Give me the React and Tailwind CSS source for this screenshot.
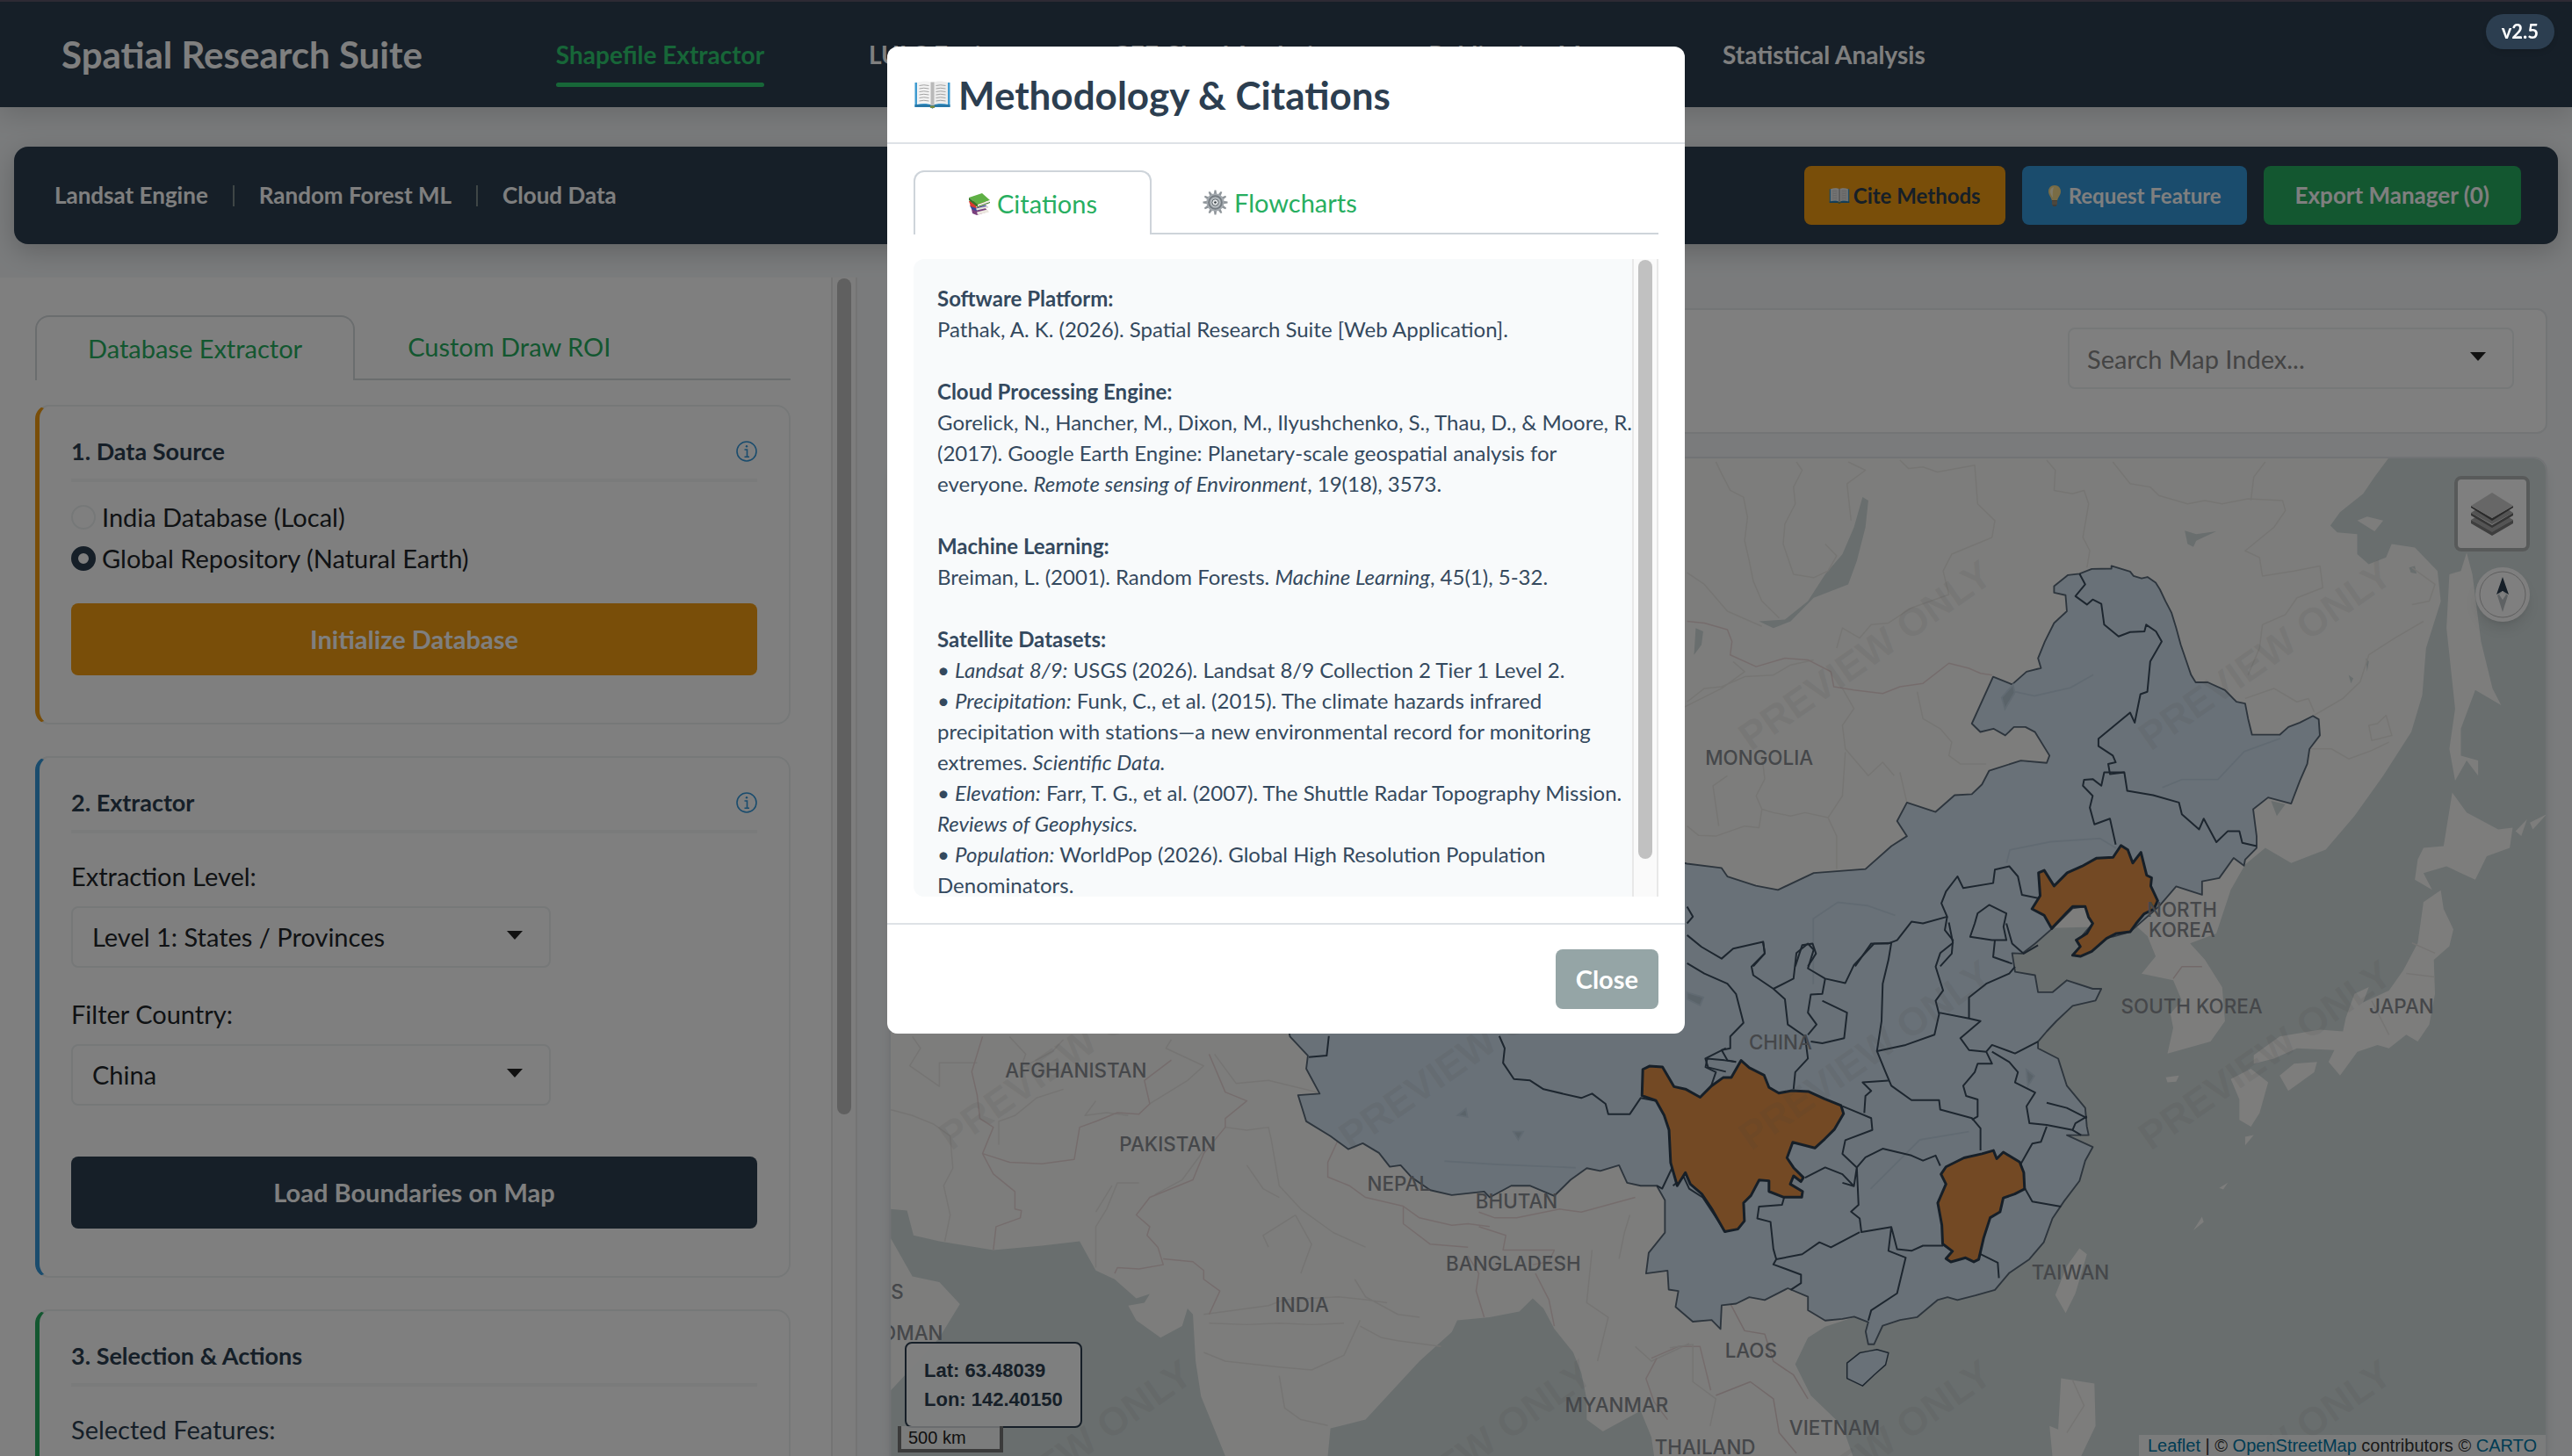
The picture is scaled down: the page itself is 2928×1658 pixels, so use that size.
import React, { useState } from 'react';

const navItems = [
  'Shapefile Extractor',
  'LULC Engine',
  'GEE Cloud Analysis',
  'Publication Maps',
  'Statistical Analysis'
];

const mapLabels = [
  { text: 'MONGOLIA', x: 1072, y: 466 },
  { text: 'CHINA', x: 1085, y: 640 },
  { text: 'NORTH', x: 1330, y: 559 },
  { text: 'KOREA', x: 1330, y: 571 },
  { text: 'SOUTH KOREA', x: 1336, y: 618 },
  { text: 'JAPAN', x: 1464, y: 618 },
  { text: 'TAIWAN', x: 1262, y: 780 },
  { text: 'AFGHANISTAN', x: 655, y: 657 },
  { text: 'PAKISTAN', x: 711, y: 702 },
  { text: 'NEPAL', x: 852, y: 726 },
  { text: 'BHUTAN', x: 924, y: 737 },
  { text: 'BANGLADESH', x: 922, y: 775 },
  { text: 'INDIA', x: 793, y: 800 },
  { text: 'MYANMAR', x: 985, y: 861 },
  { text: 'LAOS', x: 1067, y: 828 },
  { text: 'VIETNAM', x: 1118, y: 875 },
  { text: 'THAILAND', x: 1039, y: 887 },
  { text: 'S', x: 546, y: 792 },
  { text: 'OMAN', x: 555, y: 817 }
];

const watermarkCols = [579, 823, 1067, 1311];
const watermarkRows = [458, 702, 946];

const OpenBook = ({ className }) => (
  <svg viewBox="0 0 42 32" className={className} aria-hidden="true">
    <path d="M1 2h40v28H24l-3 1.500-3-1.500H1z" fill="#3f9bd0" />
    <path d="M1 27h40v3H24l-3 1.500-3-1.500H1z" fill="#2878a8" />
    <path d="M18 28.500h6l-1 2.500h-4z" fill="#7c8a3a" />
    <path d="M3.500 2C9 0 17 0 20.500 2v26C16 25.500 9 25.500 3.500 27z" fill="#f3f3f3" />
    <path d="M38.500 2C33 0 25 0 21.500 2v26c4.500-2.500 11.500-2.500 17-1z" fill="#ececec" />
    <path d="M19 1.500h4V28h-4z" fill="#b9b9b9" />
    <path
      d="M6 5.500q5-1.500 11 0M6 9q5-1.500 11 0M6 12.500q5-1.500 11 0M6 16q5-1.500 11 0M6 19.500q5-1.500 11 0M6 23q5-1.500 11 0M25 5.500q5-1.500 11 0M25 9q5-1.500 11 0M25 12.500q5-1.500 11 0M25 16q5-1.500 11 0M25 19.500q5-1.500 11 0M25 23q5-1.500 11 0"
      stroke="#a3a3a3"
      strokeWidth="1"
      fill="none"
    />
  </svg>
);

const Books = ({ className }) => (
  <svg viewBox="0 0 26 26" className={className} aria-hidden="true">
    <path d="M4 19l15-2 4 5-13 4-5-2z" fill="#7a3f7d" />
    <path d="M10 22.500l12-3 2 3-13 3z" fill="#ece7df" />
    <path d="M2 15l16-2 5 4-14 4-5-2z" fill="#39479b" />
    <path d="M9 18.500l13-3 1 2-13 3z" fill="#e9e3da" />
    <path d="M1 10l17-1 5 4-14 5-6-2z" fill="#d83a30" />
    <path d="M9 15.500l14-4 .500 2-14 4z" fill="#f1e9e2" />
    <path d="M1 6L16 1l9 8-14 5z" fill="#5fb045" />
    <path d="M1 6l10 8v3L1 9z" fill="#34752a" />
    <path d="M11 14l14-5v2l-14 5.500z" fill="#f1efe8" />
    <path d="M11 16l14-5v1l-14 5z" fill="#34752a" />
  </svg>
);

const Gear = ({ className }) => (
  <svg viewBox="-15 -15 30 30" className={className} aria-hidden="true">
    <g fill="#8e9499">
      {[0, 30, 60, 90, 120, 150, 180, 210, 240, 270, 300, 330].map((deg) => (
        <path key={deg} d="M-1.800-9L-1-14.500h2L1.800-9z" transform={`rotate(${deg})`} />
      ))}
    </g>
    <circle r="10.500" fill="#a4aaaf" />
    <circle r="8.500" fill="#747b81" />
    <circle r="6.500" fill="#b3b9bd" />
    <circle r="3.800" fill="#e6e9eb" stroke="#5c6369" strokeWidth="1" />
    <circle r="1.400" fill="#3d4449" />
  </svg>
);

const Bulb = ({ className }) => (
  <svg viewBox="0 0 16 24" className={className} aria-hidden="true">
    <path d="M8 0C3.500 0 1 3.300 1 7c0 4.500 3.500 6.500 4 11h6c.500-4.500 4-6.500 4-11 0-3.700-2.500-7-7-7z" fill="#f2d98a" />
    <path d="M7 2C4.500 2.500 3 4.500 3 7s1.500 4.500 3 7c-.500-5 0-9 1-12z" fill="#fff5cf" />
    <path d="M5 17h6v4.500L9.500 24h-3L5 21.500z" fill="#84796a" />
    <path d="M5 19h6M5 21h6" stroke="#c0b8a8" strokeWidth=".7" />
  </svg>
);

const InfoMark = () => (
  <svg viewBox="0 0 24 24" className="w-6 h-6" fill="none" stroke="#3498db" strokeWidth="1.600" aria-hidden="true">
    <circle cx="12" cy="12" r="11" />
    <path d="M9.500 10h3v8M9.500 18.200h5.500" />
    <circle cx="12" cy="6.300" r="1.200" fill="#3498db" stroke="none" />
  </svg>
);

const Caret = ({ className }) => (
  <svg viewBox="0 0 18 10" className={`pointer-events-none absolute w-[18px] h-[10px] ${className}`} aria-hidden="true">
    <path d="M0 0h18L9 10z" fill="#222" />
  </svg>
);

const ScrollRail = ({ thumbClass }) => (
  <div className="w-[30px] shrink-0 bg-[#fafafa] border-x-2 border-[#e8e8e8] flex justify-center pt-px">
    <div className={`w-4 rounded-full bg-[#c1c1c1] ${thumbClass}`} />
  </div>
);

const Card = ({ title, info, accent, children }) => (
  <section className={`bg-white rounded-2xl border-2 border-[#ecf0f1] border-l-[5px] px-9 pt-8 pb-[54px] mb-9 ${accent}`}>
    <div className="flex items-center justify-between border-b-4 border-[#f4f6f7] h-[54px] pb-3">
      <h2 className="font-bold text-[27px] text-[#2c3e50]">{title}</h2>
      {info && (
        <button type="button" aria-label={`About ${title}`}>
          <InfoMark />
        </button>
      )}
    </div>
    {children}
  </section>
);

const SelectField = ({ id, label, value, options, className }) => (
  <div className={className}>
    <label htmlFor={id} className="block leading-[45px] mb-3 text-[#212529]">{label}</label>
    <div className="relative w-[546px] max-w-full">
      <select
        id={id}
        defaultValue={value}
        className="appearance-none w-full h-[70px] rounded-lg border-2 border-[#ecf0f1] bg-white px-[22px] text-[#212529]"
      >
        {options.map((o) => <option key={o}>{o}</option>)}
      </select>
      <Caret className="right-8 top-7" />
    </div>
  </div>
);

const BaseMap = () => (
  <svg viewBox="542 279 1011 609" preserveAspectRatio="xMinYMin slice" className="absolute inset-0 w-full h-full" aria-hidden="true">
    <rect x="542" y="279" width="1011" height="609" fill="#fafaf8" />

    {/* Pacific side */}
    <path
      fill="#d2dcdc"
      d="M1456 279L1447.600 290.300 1440.600 300.600 1426.500 311.900 1420.600 320 1424.800 324.100 1437 325.200V337.500L1444 343.600 1454.600 339.500 1458 331.300 1472.200 333.400 1486 347.700 1488 366.200 1479 394.800 1476.700 423.500 1470 446 1452.900 472.700 1435.300 497.300 1417.800 517.800 1396.700 526 1380.900 516.800 1368.600 527 1359.800 542.400 1351 569 1335 575 1344 585 1354.600 601.800 1356.300 622.500 1347.500 635 1321.200 642.300 1324.700 626.700 1323 618 1330 610 1324.700 597.600 1305.400 593.500 1314 583 1309 570.600 1302 564.400 1240 566 1210 600 1230 700 1190 770 1140 800 1112.300 809 1101.800 815.700 1094 832 1103.500 851 1122.800 869.700 1129.200 888H1553V279z"
    />
    {/* Arabian Sea and Bay of Bengal */}
    <g fill="#d2dcdc" transform="matrix(.3292 0 0 .1785 535.5 615.9)">
      <path d="M20 680L50 685 62 770 110 790 210 820 300 805 370 790 385 840 400 890 435 920 475 985 500 970 490 1000 460 1010 475 1060 520 1120 560 1080 570 1020 580 1040 585 1200 595 1320 640 1524H20z" />
      <path d="M830 1524L835 1430 900 1400 1000 1200 1060 1100 1070 1060 1130 1050 1185 1030 1210 985 1230 1020 1250 1090 1285 1170 1300 1240 1310 1330V1400L1340 1440 1410 1370 1430 1460 1435 1524z" />
      <path d="M20 780L60 910 110 930 148 1005 110 1120 45 1250 20 1300z" fill="#fafaf8" />
    </g>

    {/* lakes, Sakhalin, Hokkaido */}
    <g transform="matrix(.3511 0 0 .2049 1017.5 267.8)">
      <g fill="#d2dcdc">
        <path d="M335 170L345 180 340 260 325 360 310 430 250 470 210 540 180 560 155 540 200 535 240 480 270 400 300 340 320 260z" />
        <path d="M45 560L58 570 55 610 42 640z" />
        <path d="M895 270L915 280 950 272 915 300 910 318 900 310z" />
        <path d="M1285 380L1295 375 1298 398 1288 395zM1210 650L1215 660 1212 690zM1180 700L1188 710 1184 725z" />
        <path d="M1045 1075L1070 1085 1055 1120z" />
      </g>
      <g fill="#fafaf8">
        <path d="M1385 335L1395 400 1410 600 1430 740 1445 790 1400 745 1375 860V940L1405 955V1000L1385 955 1365 1015 1355 920 1365 800 1350 560 1355 400 1375 390z" />
        <path d="M1360 1050L1385 1110 1440 1160 1465 1155 1460 1215 1420 1240 1400 1310 1350 1270 1310 1290 1325 1340 1295 1310 1300 1250 1310 1215 1345 1210z" />
        <path d="M1212 228L1240 240 1225 272 1195 240z" />
        <path d="M1470 1165L1490 1130 1480 1180zM1495 1140L1524 1115 1500 1160z" />
      </g>
    </g>

    {/* Honshu, Kyushu, Shikoku, Taiwan, Luzon */}
    <g fill="#fafaf8" transform="matrix(.3511 0 0 .2077 1017.5 562.3)">
      <path d="M1310 -60L1340 -95 1345 -40 1362 20 1355 70 1328 110 1330 210 1320 300 1300 350 1280 330 1250 370 1230 360 1195 380 1165 450 1145 410 1155 375 1090 370 1050 400 1015 415V390L1060 335 1130 315 1170 320 1175 280 1190 210 1215 190 1205 235 1250 200 1275 140 1300 60z" />
      <path d="M975 460L1010 430 1040 470 1025 560 1010 600 990 580V520z" />
      <path d="M1060 450L1085 415 1125 410 1120 440 1075 495z" />
      <path d="M712 958L725 975 705 1090 688 1148 670 1095 690 1010z" />
      <path d="M680 1340L738 1355 740 1480 715 1568H665L660 1480 675 1490z" />
      <path d="M862 455L885 450 880 468 865 470zM1000 630L1015 625 1000 655zM910 905L925 865 928 880zM955 780L970 765 962 785z" />
    </g>

    {/* administrative lines of the base layer */}
    <g fill="none" strokeWidth="1.500" strokeLinejoin="round">
      <g transform="matrix(.3511 0 0 .2049 1017.5 267.8)">
        <g stroke="#ecebe7">
          <path vectorEffect="non-scaling-stroke" d="M80 65L90 100 105 150 128 170 135 230 130 300 138 360 145 420 160 480 190 530M220 65L230 90 215 140 218 190 200 250 197 310 215 400 250 410 275 390 290 345 270 310M310 65L340 90 308 130 315 240M400 60L415 85 440 80 465 95 530 75 535 190 565 240 560 290 490 340 475 390 485 460 420 500 380 545 350 550 330 590 300 560 290 620" />
          <path vectorEffect="non-scaling-stroke" d="M655 60L670 90 668 150 700 160 720 150 728 190 718 290 730 330 725 380M770 65L800 130 835 140 850 165 900 190 930 180 960 190 1005 175 1065 180 1070 210 1050 260 1000 330 1025 350 1030 405 1085 390 1130 375 1135 440 1090 470 1070 520 1030 550 1025 620 1005 700M1035 65L1015 110 1010 180" />
          <path vectorEffect="non-scaling-stroke" d="M30 395L60 430 100 510 160 555M30 780L60 740 90 735 130 705 180 700 210 670 250 655M110 660L130 690 90 740 20 800M300 740L320 800 300 850 305 920 345 1000 370 960 390 1000M430 750L440 830 470 860 490 900 485 940 505 965 550 965M30 1150L50 1178 80 1180 130 1150 155 1155 160 1100 180 1110 210 1120 235 1110 275 1125 290 1180 290 1278M305 930L300 1060 275 1125M400 990L412 1080M100 1000L75 1030 85 1150M160 940L165 1010 150 1060 160 1100" />
          <path vectorEffect="non-scaling-stroke" d="M1290 380L1330 430 1320 480 1290 490M1310 540L1260 590 1215 640 1200 720 1170 770 1120 820M1000 770L1050 740 1090 780 1110 770 1120 810M1110 920L1150 920 1180 950 1220 925 1250 900M1215 850L1230 845 1245 820 1255 880 1220 895z" />
        </g>
        <path vectorEffect="non-scaling-stroke" stroke="#ebd9d9" d="M30 540L60 545 100 565 108 600 105 640 150 675 200 650 240 655 280 690 285 735 320 745 370 755 400 735 440 725 485 665 520 680 540 695 560 700" />
      </g>
      <g transform="matrix(.3292 0 0 .1785 535.5 615.9)">
        <path vectorEffect="non-scaling-stroke" stroke="#ebe9e6" d="M60 90L75 130 55 190 110 260V180H180M20 340L60 360 100 390 130 430 135 540 118 600 130 700 120 790M240 90L270 150 260 200 320 140 340 100M340 270L290 300 250 360 220 380 220 460M400 310L380 360 420 350 460 360M540 100L530 130 600 190 570 240 500 320M620 150L660 250 720 240 810 280M640 400L680 410 720 400 725 440 740 600 780 680 840 760 900 810M600 480L560 580 510 630M480 590L440 590 420 680 400 740 400 880M430 600L400 690M680 530L710 610 740 640M770 700L710 770 720 810M770 700L800 800 780 900M600 1040L660 1025 720 1010 750 990 850 980 900 990 940 1000M610 1070L680 1075 740 1070 800 1075 860 1070M600 1170L640 1200 740 1220 800 1230 860 1180 890 1060M740 1250L750 1360 780 1400 830 1420M890 1080L930 1120 960 1130 1040 1150M880 920L900 980 960 1040 1000 1050M1320 820L1310 1000 1350 1050 1330 1200M1390 700L1380 760 1370 850M1400 1150L1430 1200 1500 1140" />
        <path vectorEffect="non-scaling-stroke" stroke="#ead9d9" d="M190 90L170 210 180 290 185 370 210 400 190 490 240 520 300 525 360 510 370 400 400 380 440 350 480 355 500 320 490 240 540 170M190 490L210 560 250 620 250 680 262 685 260 710 215 740 210 820M610 150L640 280 680 310 640 370 640 400 600 490 580 580 500 640 475 700 500 740 495 770 515 810 525 870 480 885 440 880 435 900M525 850L580 860 600 890 600 920 630 960 610 1040M850 440L830 520 830 570 870 600 900 640 970 670 1000 710 1060 735 1090 730 1130 740M970 670V730L1020 800 1090 810M1110 690L1140 710 1180 710 1260 680 1300 690 1400 640M1110 740L1160 770 1155 820 1250 820 1240 860 1210 870M1090 840L1110 900 1105 960 1120 1050M1215 900L1240 990 1250 1080M1440 1190L1420 1260 1435 1340 1460 1400M1430 1190L1480 1150 1520 1150 1540 1300" />
      </g>
      <g transform="matrix(.3511 0 0 .2077 1017.5 562.3)">
        <path vectorEffect="non-scaling-stroke" stroke="#e4d2d2" d="M875 165L890 130 925 130M105 1120L130 1200 165 1210 180 1290 215 1330 240 1400M80 1390L140 1350 180 1400 190 1500 220 1560" />
        <path vectorEffect="non-scaling-stroke" stroke="#ebe9e6" d="M0 1250L40 1240 40 1350 80 1400 70 1480M1290 60L1330 90M1280 150L1330 160M1220 230L1250 330M700 1345L720 1420 690 1500" />
      </g>
    </g>

    {/* China */}
    <path
      fill="#d3e3f0"
      stroke="#5b6b7b"
      strokeWidth="1"
      strokeLinejoin="round"
      d="M1252 361V357L1260.500 350.200 1267.500 349.400 1275 346.500 1287 346.300V344.600L1298.400 348.100 1300.500 350.800 1305.400 352.200 1309 351.400 1314 354.900 1316.600 359 1320 366.200 1323.700 373.300 1326.500 382.500 1329.300 392.800 1332.800 403 1335.600 411.200 1338.400 415.700H1345.800L1356.300 420.500 1363.300 427.600 1368.600 428.600 1370.400 437.900 1372.800 447.700H1389.700L1395 443 1402 440.300 1410 436.200 1413.500 438.300 1414.200 448.100 1407.900 456.300 1406.500 465.500 1402 475.800 1396.700 489.700 1382.600 486 1373.500 493.200 1375.600 509.600V516.800L1368.600 523.900 1367.900 527.600 1361.600 522.900 1352.800 535.200 1342.300 537.200V545.400L1326.500 540.300 1315.900 552.600 1298.400 568 1287.900 571 1271 573 1266.800 573.100 1275.600 562.900 1271 552.600 1263.300 553.600 1251 565.900 1240.400 575.200 1232.400 581.300 1226.400 581 1228.200 592.400 1240.400 594.500 1242.200 604.900H1251L1259.800 597.600 1275.600 602.800H1280.800L1277.300 610 1263.300 613.200 1253.400 622.500 1247.500 628.800 1242.200 635V639.100L1254.500 645.400 1259.800 662 1271 675.500 1272 686.900 1273.100 692.100 1259.800 692.100 1275.600 699.400 1271 707.700 1267.500 720.100 1258 732.600 1251 743 1245.700 757.500 1236.900 767.900 1224.700 776.200 1215.900 786.600 1204 790 1193 792.800 1187 791 1180.800 792.800 1168.500 803.200 1158 805 1147.400 808.400 1142.100 819.800H1138.600L1137 812 1138.600 806.300 1130 803 1122.800 804.300 1112.300 805.300 1101.800 799V790.800L1089.500 785.600 1075.400 792.800 1066 791 1058 795 1049.100 796 1048.400 810.500 1043 805 1031.500 806 1021 797 1022.700 787.300 1016.800 786.400 1016.100 774.800 1003 776.600 1004.600 764 1014.500 751.600V731.900L1009.500 723H999.700L991.400 721.200 986.500 710.500 975 714 966.800 712.300 956.900 719.400 947 729.200 932 723 920.700 723 907.500 730.100 904.200 726.600 884.400 728.700 871.300 725.700 860 718 853.200 710.500 846.600 711.400 840 703 830.100 697.100 821.200 700.700 810.400 692.700 795.600 683.700 790.600 667.700 803.800 666.800 795.600 651.600 796.600 643.600 785.700 632 770 560 830 480 1028 526.400 1049 529 1052.600 534.200 1070 539.900 1083.500 542.400 1105.300 532.100 1136.900 529.700 1152.700 515.700 1162.200 509.600 1156.200 500.400 1162.200 489.100 1179.700 494.800 1191.300 484.600 1201.800 484 1208 478 1212.400 469.600 1231.700 463.500 1247.500 464.900 1249.200 460.400 1240.400 446.100 1234.500 443H1227.500L1222.200 448.100 1215 444 1207 446 1201.800 440.900 1214.800 412.300 1226.400 417 1235.200 409.200 1244 407 1242.200 401 1246.400 390.700 1252 379.500 1259.800 372.300 1259 362.500z"
    />

    {/* lakes and rivers under the provinces */}
    <g fill="none" stroke="#c3d5e4" strokeWidth="1">
      <path d="M1226 421L1240 424 1262 419 1276 411M1318 480L1330 475 1352 475 1368 458 1390 450M1223 526L1225 518 1250 513 1280 511 1290 517M1105 600L1105 560 1120 550 1138 552 1155 558M880 708L912 710 960 712M1140 725L1170 695 1200 690" />
      <path d="M1220 425L1227 417 1228 422 1222 432z" fill="#b4c6d3" />
      <path d="M1028 605L1038 608 1036 613 1028 609zM888 680L893 676 894 681zM922 690L928 690 925 695zM1235 652L1240 656 1236 662z" fill="#b4c6d3" />
    </g>

    {/* province outlines */}
    <g fill="none" stroke="#3a4c5e" strokeWidth="2" strokeLinejoin="round">
      <g transform="matrix(.3511 0 0 .2049 1017.5 267.8)">
        <path vectorEffect="non-scaling-stroke" d="M712 398L722 430 705 465 725 490 735 475 750 488 755 550 780 585 800 572 825 570 828 550 845 570 855 600 835 660 830 750 818 757 808 842 800 812 745 890 745 912 770 940 775 960 762 965 765 995 790 990 795 1045 840 1058 885 1080 890 1115 920 1160 928 1128 950 1198 970 1165 990 1165 995 1200 1020 1210" />
        <path vectorEffect="non-scaling-stroke" d="M790 990L755 990 750 1030 735 1010 720 1012 718 1030 735 1060 730 1095 738 1145 765 1128 775 1205" />
        <path vectorEffect="non-scaling-stroke" d="M640 1365L612 1355 605 1300 590 1270 565 1280 562 1320 510 1335 500 1300 480 1345 472 1380 482 1420 440 1440 420 1435 395 1490 380 1500 350 1500 322 1568" />
        <path vectorEffect="non-scaling-stroke" d="M555 1385L585 1410 580 1450 585 1490 560 1490 522 1480 530 1440 535 1410zM482 1420L478 1460 492 1490 490 1530 470 1568M585 1440L595 1500 615 1530 640 1505M565 1490L562 1540 595 1560" />
        <path vectorEffect="non-scaling-stroke" d="M30 1475L55 1510 90 1545 110 1515 162 1495 165 1530 145 1568M30 1390L40 1420 30 1440M218 1568L230 1505 248 1500 254 1530 240 1568" />
      </g>
      <g transform="matrix(.3511 0 0 .2077 1017.5 562.3)">
        <path vectorEffect="non-scaling-stroke" d="M162 55L165 90 142 130 145 155 180 195 215 165 220 90 240 62 250 80 240 135 270 165 305 178 320 125 355 62 385 60 380 110 370 180 368 290 360 378 375 440 385 480 420 522 468 522 470 550 525 575 540 605 540 670" />
        <path vectorEffect="non-scaling-stroke" d="M30 120L60 150 100 180 115 210 128 295 105 335 105 370 90 375 100 405 115 410M180 195L200 225 205 300 235 335 240 400 218 440 215 490M270 165L265 210 245 212 240 265 255 300 240 330M265 230L308 265 303 340 265 355 245 350" />
        <path vectorEffect="non-scaling-stroke" d="M360 378L410 360 460 330 468 270 462 230 475 200 462 130 470 90 492 60 485 0M468 265L520 282 520 220 550 180 590 150 600 130M520 282L540 290 505 340 520 375 550 380 560 360 600 385 640 350M550 380L560 415 535 415 530 440 510 480 515 510 535 520 535 570 525 580M560 380L590 410 605 440 600 470 635 500 620 540 625 590 655 595 700 610 705 590 725 570M655 600L645 645 630 650 610 710M700 610L715 625M655 530L690 545 725 575" />
        <path vectorEffect="non-scaling-stroke" d="M115 410L95 405 65 400 62 425 80 440 70 490M300 540L350 575 352 610 305 640 300 680 325 720 320 775 300 765M380 465L335 470 350 495 340 510 338 560M325 720L340 690 370 665 420 685 440 700 462 685 470 715M325 720L328 830 315 850 330 870 333 910 385 895 395 960 420 965 440 950 475 950M235 750L270 720 300 740 320 775M200 800L195 830 155 835 152 870 175 880 180 960 185 990 230 975 260 940 280 955 330 910M385 895L380 965 410 985 395 1090 350 1140 345 1170M185 990L180 1005 228 1035 228 1060 210 1080M540 975L570 1000 572 1045M615 775L630 820 680 835" />
        <path vectorEffect="non-scaling-stroke" fill="#d3e3f0" strokeWidth="1.500" d="M345 1260L360 1255 380 1265 375 1300 355 1330 335 1362 308 1340V1295L330 1265z" />
      </g>
      <g transform="matrix(.3292 0 0 .1785 535.5 615.9)">
        <path vectorEffect="non-scaling-stroke" d="M832 88L828 155 795 160M1148 88L1158 130 1155 180 1175 235 1205 240 1230 270 1300 300 1320 285 1345 320 1350 355 1390 355 1410 300 1440 310M1468 540L1450 610 1440 600M1470 600L1490 570 1500 610 1525 640 1568 760M1568 130L1530 165 1535 195 1568 210" />
      </g>
    </g>

    {/* selected provinces */}
    <g fill="#e69248" stroke="#2c3e50" strokeWidth="3" strokeLinejoin="round">
      <path
        vectorEffect="non-scaling-stroke"
        d="M1292.800 515.300L1297 518 1300 526 1305 519.500 1308.500 533.500 1311.500 535 1311 540 1315.200 549 1313 554 1307 557 1302 563 1298.400 568 1290 569 1284 572 1275 580 1268 583 1263.300 582.300 1268 577 1265.500 573 1272 569 1275.600 562.900 1273 559 1271 552.600 1263.300 552.600 1259 557 1250.500 566 1246 558 1238.500 554 1243.500 546 1242.500 532 1246 530.500 1252 540 1260 532 1269 528 1278 523 1288 522.500z"
      />
      <path
        vectorEffect="non-scaling-stroke"
        d="M1061 646.500L1066 651 1075 655.500 1078 663 1084 666.500 1092 665 1102 665.500 1112 670 1122 674 1123.500 679 1118 688.500 1112 694.500 1106 700 1092.500 696.500 1089 706 1093 712 1099 718 1097.500 720.500 1093 717 1091 722 1098.500 726.500 1098 730 1087 730 1078 726.500 1078 720 1072 719.500 1067 729 1062.500 733.500 1063 744.500 1059 749.500 1051 751 1043 737 1037 728 1030 722 1027 715 1022 723 1018 709 1017 689 1014 680 1009 671 1000.500 668 1001 652 1005 650 1013 650.500 1020 662.500 1027 664 1036 669 1043 662 1050 657 1055 657z"
      />
      <path
        vectorEffect="non-scaling-stroke"
        d="M1186 711.500L1197 706 1208 703.500 1215 701.500 1217 706.500 1221 702.500 1231 708.500 1233.500 715 1234 725 1228 728 1221 730.500 1219 739 1213 742.500 1209 755 1206 768 1203 769.500 1198 767 1189 769.500 1186 767.500 1190 763 1184 758.500 1183.500 747 1181 733.500 1186 722 1183 716z"
      />
    </g>

    <g className="font-['Liberation_Sans'] font-bold" fontSize="24" fill="#808080" fillOpacity=".1">
      {watermarkRows.map((y) => watermarkCols.map((x) => (
        <text key={`${x}-${y}`} x={x} y={y} transform={`rotate(-35 ${x} ${y})`}>PREVIEW ONLY</text>
      )))}
    </g>
    <g className="font-['Inter'] font-medium" fontSize="12" fill="#8b8f94" textAnchor="middle">
      {mapLabels.map((l) => <text key={`${l.text}-${l.x}`} x={l.x} y={l.y}>{l.text}</text>)}
    </g>
  </svg>
);

const MapPanel = () => (
  <div className="relative flex-1 min-h-0 rounded-t-2xl overflow-hidden border-2 border-b-0 border-[#e3e7ea] shadow-lg bg-[#fafaf8]">
    <BaseMap />

    <button type="button" aria-label="Layers" className="absolute right-[18px] top-5 w-[86px] h-[86px] rounded-lg bg-white border-4 border-[#b0b4b4] flex items-center justify-center">
      <svg viewBox="0 0 26 26" className="w-[52px] h-[52px]" aria-hidden="true">
        <path d="M1 18.500L13 25.500 25 18.500V16.500L13 23 1 16.500z" fill="#7d7d7d" />
        <path d="M1 16.500L13 23.500 25 16.500 22 14.800 13 20 4 14.800z" fill="#a8a8a8" />
        <path d="M1 14L13 21 25 14V12.500L13 19.500 1 12.500z" fill="#6a6a6a" />
        <path d="M1 12.500L13 19 25 12.500 22 10.500 13 15.500 4 10.500z" fill="#a8a8a8" />
        <path d="M1 9.500L13 17 25 9.500V8.500L13 15.500 1 8.500z" fill="#555" />
        <path d="M13 1L25 8.500 13 15.500 1 8.500z" fill="#cfcfcf" />
      </svg>
    </button>
    <button type="button" aria-label="North" className="absolute right-[18px] top-[124px] w-[62px] h-[62px] rounded-full bg-white shadow-lg flex items-center justify-center">
      <svg viewBox="-30 -30 60 60" className="w-[60px] h-[60px]" aria-hidden="true">
        <circle r="26" fill="none" stroke="#bbb" strokeWidth="1" />
        <path d="M0-20L7 0 0-4-7 0z" fill="#2c3e50" />
        <path d="M0 20L6 1 0-4-6 1z" fill="#bdc3c7" />
        <path d="M0-4L4 0 0 6-4 0z" fill="#fff" />
      </svg>
    </button>

    <div className="absolute left-4 bottom-8 rounded-lg border-2 border-[#2c3e50] bg-white/95 px-5 py-[14px] font-['Liberation_Sans'] font-bold text-[22px] leading-[33px] text-[#2c3e50]">
      <p>Lat: 63.48039</p>
      <p>Lon: 142.40150</p>
    </div>
    <div className="absolute left-2 bottom-1 w-[120px] h-[30px] border-4 border-t-0 border-[#777] bg-white/80 px-2 font-['Liberation_Sans'] text-[20px] leading-[26px] text-[#222]">
      500 km
    </div>
    <p className="absolute right-0 bottom-0 bg-white/80 px-[10px] font-['Liberation_Sans'] text-[20px] leading-6 text-[#333]">
      <a href="#leaflet" className="text-[#0078a8]">Leaflet</a> | © <a href="#osm" className="text-[#0078a8]">OpenStreetMap</a> contributors © <a href="#carto" className="text-[#0078a8]">CARTO</a>
    </p>
  </div>
);

const Sidebar = () => (
  <aside className="w-1/3 flex bg-white min-h-0 overflow-hidden">
    <div className="flex-1 min-w-0 pl-10 pr-[46px] pt-[43px] overflow-hidden">
      <div className="flex border-b-2 border-[#d5dadd] mb-7">
        <button type="button" className="-mb-0.5 h-[74px] px-[58px] border-2 border-b-0 border-[#d5dadd] rounded-t-2xl bg-white text-[#27ae60]">Database Extractor</button>
        <button type="button" className="h-[72px] px-[60px] text-[#27ae60]">Custom Draw ROI</button>
      </div>

      <Card title="1. Data Source" info accent="border-l-[#f39c12]">
        <div className="pt-4 text-[#212529]">
          {['India Database (Local)', 'Global Repository (Natural Earth)'].map((name, i) => (
            <label key={name} className="flex items-center gap-[7px] h-[47px]">
              <input
                type="radio"
                name="source"
                defaultChecked={i === 1}
                className="appearance-none w-7 h-7 rounded-full border-2 border-[#ecf0f1] checked:border-8 checked:border-[#2c3e50]"
              />
              {name}
            </label>
          ))}
        </div>
        <button type="button" className="mt-7 w-full h-[82px] rounded-lg bg-[#f39c12] text-white font-bold">Initialize Database</button>
      </Card>

      <Card title="2. Extractor" info accent="border-l-[#3498db]">
        <SelectField
          id="level"
          label="Extraction Level:"
          value="Level 1: States / Provinces"
          options={['Level 0: Countries', 'Level 1: States / Provinces']}
          className="pt-[26px]"
        />
        <SelectField id="country" label="Filter Country:" value="China" options={['China', 'India']} className="pt-[30px]" />
        <button type="button" className="mt-[58px] w-full h-[82px] rounded-lg bg-[#2c3e50] text-white font-bold">Load Boundaries on Map</button>
      </Card>

      <Card title="3. Selection &amp; Actions" accent="border-l-[#27ae60]">
        <p className="pt-[26px] leading-[45px] text-[#2c3e50]">Selected Features:</p>
      </Card>
    </div>
    <ScrollRail thumbClass="h-[71%]" />
  </aside>
);

const CitationsModal = ({ onClose }) => (
  <div role="dialog" aria-labelledby="modal-title" className="fixed inset-x-0 top-0 z-40 mx-auto mt-[53px] w-[908px] max-w-full rounded-xl bg-white">
    <div className="flex items-center gap-2 h-[111px] px-[30px] border-b-2 border-[#dee2e6]">
      <OpenBook className="w-[43px] h-8" />
      <h1 id="modal-title" className="font-bold text-[44px] text-[#2c3e50]">Methodology &amp; Citations</h1>
    </div>

    <div className="p-[30px]">
      <div className="flex border-b-2 border-[#ced4da] mb-7">
        <button type="button" className="-mb-0.5 h-[73px] px-[60px] border-2 border-b-0 border-[#ced4da] rounded-t-xl bg-white text-[#27ae60] flex items-center gap-[7px]">
          <Books className="w-[26px] h-[26px]" /> Citations
        </button>
        <button type="button" className="h-[71px] pt-0.5 px-[58px] text-[#27ae60] flex items-center gap-[7px]">
          <Gear className="w-[29px] h-[29px]" /> Flowcharts
        </button>
      </div>

      <div className="flex h-[726px] bg-[#f8fafb] rounded-l-xl overflow-hidden">
        <div className="flex-1 min-w-0 pl-[27px] pt-[27px] overflow-hidden text-[24px] leading-[35px] text-[#34495e] flex flex-col gap-9">
          <p>
            <b>Software Platform:</b><br />
            Pathak, A. K. (2026). Spatial Research Suite [Web Application].
          </p>
          <p>
            <b>Cloud Processing Engine:</b><br />
            Gorelick, N., Hancher, M., Dixon, M., Ilyushchenko, S., Thau, D., &amp; Moore, R. (2017). Google Earth Engine: Planetary-scale geospatial analysis for everyone. <i>Remote sensing of Environment</i>, 19(18), 3573.
          </p>
          <p>
            <b>Machine Learning:</b><br />
            Breiman, L. (2001). Random Forests. <i>Machine Learning</i>, 45(1), 5-32.
          </p>
          <p>
            <b>Satellite Datasets:</b><br />
            • <i>Landsat 8/9:</i> USGS (2026). Landsat 8/9 Collection 2 Tier 1 Level 2.<br />
            • <i>Precipitation:</i> Funk, C., et al. (2015). The climate hazards infrared precipitation with stations—a new environmental record for monitoring extremes. <i>Scientific Data.</i><br />
            • <i>Elevation:</i> Farr, T. G., et al. (2007). The Shuttle Radar Topography Mission. <i>Reviews of Geophysics.</i><br />
            • <i>Population:</i> WorldPop (2026). Global High Resolution Population Denominators.
          </p>
        </div>
        <ScrollRail thumbClass="h-[94%]" />
      </div>
    </div>

    <div className="flex justify-end border-t-2 border-[#dee2e6] px-[30px] py-7">
      <button type="button" onClick={onClose} className="h-[68px] px-[23px] rounded-lg bg-[#95a5a6] text-white font-bold">Close</button>
    </div>
  </div>
);

export default function App() {
  const [showModal, setShowModal] = useState(true);

  return (
    <div className="h-screen flex flex-col overflow-hidden bg-[#f4f7f9] font-['Lato',sans-serif] text-[29px]">
      <header className="flex items-center h-[122px] shrink-0 pl-[70px] bg-[#2c3e50] text-white border-t-2 border-[#5a5468] shadow-[0_8px_30px_rgba(0,0,0,0.15)]">
        <span className="font-bold text-[42px] mr-[152px]">Spatial Research Suite</span>
        <nav className="flex gap-[119px] text-[28px] font-bold">
          {navItems.map((item, i) => (
            <a
              key={item}
              href="#top"
              className={i === 0
                ? "relative text-[#2ecc71] after:absolute after:inset-x-0 after:-bottom-4 after:h-[5px] after:rounded-full after:bg-[#2ecc71] after:content-['']"
                : 'text-white'}
            >
              {item}
            </a>
          ))}
        </nav>
      </header>

      <div className="mt-[45px] mx-4 h-[111px] shrink-0 rounded-2xl bg-[#2c3e50] text-white font-bold text-[26px] flex items-center justify-between pl-[46px] pr-[42px] shadow-[0_8px_30px_rgba(0,0,0,0.2)]">
        <div className="flex items-center gap-7">
          <span>Landsat Engine</span>
          <span className="w-0.5 h-6 bg-[#7f8c8d]" />
          <span>Random Forest ML</span>
          <span className="w-0.5 h-6 bg-[#7f8c8d]" />
          <span>Cloud Data</span>
        </div>
        <div className="flex items-center gap-[19px]">
          <button type="button" onClick={() => setShowModal(true)} className="h-[67px] px-7 rounded-lg bg-[#f39c12] text-[24px] text-[#2c3e50] flex items-center gap-1">
            <OpenBook className="w-6 h-[18px]" /> Cite Methods
          </button>
          <button type="button" className="h-[67px] px-[29px] rounded-lg bg-[#3498db] text-[24px] flex items-center gap-2">
            <Bulb className="w-4 h-6" /> Request Feature
          </button>
          <button type="button" className="h-[67px] px-9 rounded-lg bg-[#27ae60]">Export Manager (0)</button>
        </div>
      </div>

      <main className="flex flex-1 min-h-0 mt-[38px]">
        <Sidebar />
        <div className="flex-1 min-w-0 flex flex-col pl-9 pr-7 pt-[35px]">
          <div className="h-[143px] shrink-0 mb-[26px] rounded-xl border-2 border-[#e6eaec] bg-white flex justify-end px-9 pt-5">
            <div className="relative w-[508px]">
              <input
                type="text"
                aria-label="Search Map Index"
                placeholder="Search Map Index..."
                className="w-full h-[70px] rounded-lg border-2 border-[#ecf0f1] bg-white px-5 placeholder:text-[#888]"
              />
              <Caret className="right-8 top-7" />
            </div>
          </div>
          <MapPanel />
        </div>
      </main>

      {showModal && <div className="fixed inset-0 z-30 bg-black/50" />}
      {showModal && <CitationsModal onClose={() => setShowModal(false)} />}

      <span className="fixed right-5 top-4 z-50 rounded-full bg-[#2c3e50] text-white font-bold text-[22px] leading-10 px-[18px] shadow-md">v2.5</span>
    </div>
  );
}
